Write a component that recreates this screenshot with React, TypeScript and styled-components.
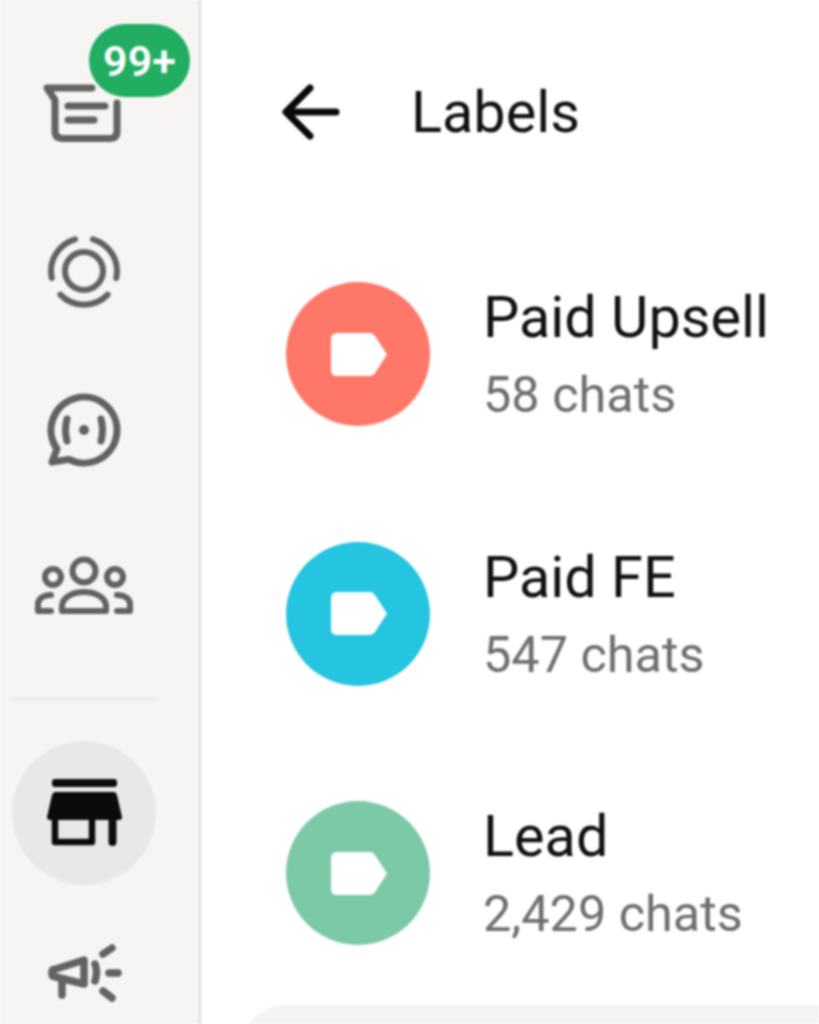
import styled, { createGlobalStyle } from 'styled-components';

const GlobalStyle = createGlobalStyle`
  html, body {
    margin: 0;
    padding: 0;
    background: #fff;
    overflow: hidden;
  }
`;

const Page = styled.div`
  display: flex;
  width: 819px;
  height: 1024px;
  overflow: hidden;
  font-family: Roboto, 'Liberation Sans', sans-serif;
  filter: blur(0.9px);
`;

const Sidebar = styled.nav`
  flex: none;
  width: 168px;
  height: 100%;
  padding: 40px 31px 0 0;
  background: #f6f5f3;
  border-right: 2px solid #dcdbd8;
  display: flex;
  flex-direction: column;
  align-items: center;
  gap: 15px;
`;

const NavButton = styled.div<{ $active?: boolean }>`
  position: relative;
  flex: none;
  width: 144px;
  height: 144px;
  border-radius: 50%;
  display: flex;
  align-items: center;
  justify-content: center;
  background: ${(p) => (p.$active ? '#e9e8e6' : 'transparent')};
  color: ${(p) => (p.$active ? '#0b0b0b' : '#636261')};
`;

const NavIcon = styled.svg<{ $stroke?: number }>`
  width: 96px;
  height: 96px;
  overflow: visible;
  fill: none;
  stroke: currentColor;
  stroke-width: ${(p) => p.$stroke ?? 7};
  stroke-linecap: round;
  stroke-linejoin: round;
`;

const Badge = styled.span`
  position: absolute;
  left: 77px;
  top: -16px;
  width: 101px;
  height: 73px;
  border-radius: 37px;
  background: #21ad62;
  color: #fff;
  font-size: 43px;
  font-weight: 600;
  display: flex;
  align-items: center;
  justify-content: center;
`;

const Divider = styled.hr`
  flex: none;
  width: 144px;
  height: 2px;
  margin: 22px 0 26px;
  border: 0;
  background: #e6e5e3;
`;

const Main = styled.main`
  flex: 1;
  min-width: 0;
  display: flex;
  flex-direction: column;
`;

const Header = styled.header`
  flex: none;
  height: 224.3px;
  padding-left: 80px;
  display: flex;
  align-items: center;
  gap: 70px;
`;

const BackIcon = styled.svg`
  flex: none;
  width: 60px;
  height: 60px;
  fill: none;
  stroke: #0a0a0a;
  stroke-width: 7;
  stroke-linecap: round;
  stroke-linejoin: round;
`;

const Title = styled.h1`
  margin: 0;
  font-size: 57.6px;
  font-weight: 400;
  color: #111;
  white-space: nowrap;
`;

const LabelList = styled.ul`
  flex: none;
  margin: 0;
  padding: 0 0 0 85px;
  list-style: none;
`;

const LabelRow = styled.li`
  height: 259.5px;
  display: flex;
  align-items: center;
  gap: 53px;
`;

const Avatar = styled.div<{ $color: string }>`
  flex: none;
  width: 144px;
  height: 144px;
  border-radius: 50%;
  background: ${(p) => p.$color};
  display: flex;
  align-items: center;
  justify-content: center;
`;

const TagIcon = styled.svg`
  width: 56px;
  height: 43px;
  margin-left: 2px;
  fill: #fff;
`;

const LabelText = styled.div`
  display: flex;
  flex-direction: column;
  white-space: nowrap;
`;

const LabelName = styled.div`
  font-size: 57.6px;
  line-height: 82px;
  color: #111;
`;

const LabelCount = styled.div`
  font-size: 50.4px;
  line-height: 72px;
  color: #6e6e6e;
`;

const BottomPanel = styled.div`
  flex: none;
  height: 120px;
  margin: 2px -80px 0 38px;
  border-radius: 48px 48px 0 0;
  background: #f4f3f1;
`;

const labels = [
  { name: 'Paid Upsell', count: '58 chats', color: '#ff7769' },
  { name: 'Paid FE', count: '547 chats', color: '#25c4e0' },
  { name: 'Lead', count: '2,429 chats', color: '#7cc9a7' },
];

export default function App() {
  return (
    <>
      <GlobalStyle />
      <Page>
        <Sidebar>
          <NavButton>
            <NavIcon viewBox="0 0 96 96">
              <path d="M56 24H11l8 12v31q0 7.500 8 7.500h47q7 0 7-7.500V39" />
              <path d="M32 42h37M32 56h26" />
            </NavIcon>
            <Badge>99+</Badge>
          </NavButton>
          <NavButton>
            <NavIcon viewBox="0 0 96 96" $stroke={6}>
              <circle cx="48" cy="48" r="19" />
              <path d="M39 16.300A33 33 0 0 0 15.800 55M57 16.300A33 33 0 0 1 80.200 55M24.300 71.700a33 33 0 0 0 47.400 0" />
            </NavIcon>
          </NavButton>
          <NavButton>
            <NavIcon viewBox="0 0 96 96">
              <path d="M21 67A33 33 0 1 1 33 77.400L16 80Z" />
              <path d="M31 37q-3 11 0 22M65 37q3 11 0 22" />
              <circle cx="48" cy="48" r="5" fill="currentColor" stroke="none" />
            </NavIcon>
          </NavButton>
          <NavButton>
            <NavIcon viewBox="0 0 96 96" $stroke={6}>
              <circle cx="48" cy="30" r="11.500" />
              <circle cx="17" cy="36" r="8" />
              <circle cx="79" cy="36" r="8" />
              <path d="M26 70h44v-5c0-8-10-14-22-14s-22 6-22 14Z" />
              <path d="M15 54C6 54 2 59 2 63v7h13M81 54c9 0 13 5 13 9v7H81" />
            </NavIcon>
          </NavButton>
          <Divider />
          <NavButton $active>
            <NavIcon viewBox="0 0 96 96">
              <g fill="currentColor" stroke="none">
                <rect x="16" y="14" width="65" height="8" rx="3" />
                <path d="M19 27H78Q80 27 81 30L86 52Q86 55 83 55H14Q11 55 11 52L16 30Q17 27 19 27Z" />
              </g>
              <path d="M19 55V77H56V55" strokeWidth="6.500" />
              <path d="M76.500 55V77" strokeWidth="8" />
            </NavIcon>
          </NavButton>
          <NavButton>
            <NavIcon viewBox="0 0 96 96" $stroke={7.5}>
              <path d="M20 45L48 36V60L20 53Q16 53 16 50V48Q16 45 20 45Z" />
              <path d="M26 58V71M59 40q3 8 0 17M67 30l9-6M73 49h9M67 67l9 7" />
            </NavIcon>
          </NavButton>
        </Sidebar>
        <Main>
          <Header>
            <BackIcon viewBox="0 0 60 60">
              <path d="M55 30H6M29 6L5 30l24 24" />
            </BackIcon>
            <Title>Labels</Title>
          </Header>
          <LabelList>
            {labels.map((label) => (
              <LabelRow key={label.name}>
                <Avatar $color={label.color}>
                  <TagIcon viewBox="0 0 56 43">
                    <path d="M6 0H39Q42 0 44 3L56 21.500 44 40Q42 43 39 43H6Q0 43 0 37V6Q0 0 6 0Z" />
                  </TagIcon>
                </Avatar>
                <LabelText>
                  <LabelName>{label.name}</LabelName>
                  <LabelCount>{label.count}</LabelCount>
                </LabelText>
              </LabelRow>
            ))}
          </LabelList>
          <BottomPanel />
        </Main>
      </Page>
    </>
  );
}
